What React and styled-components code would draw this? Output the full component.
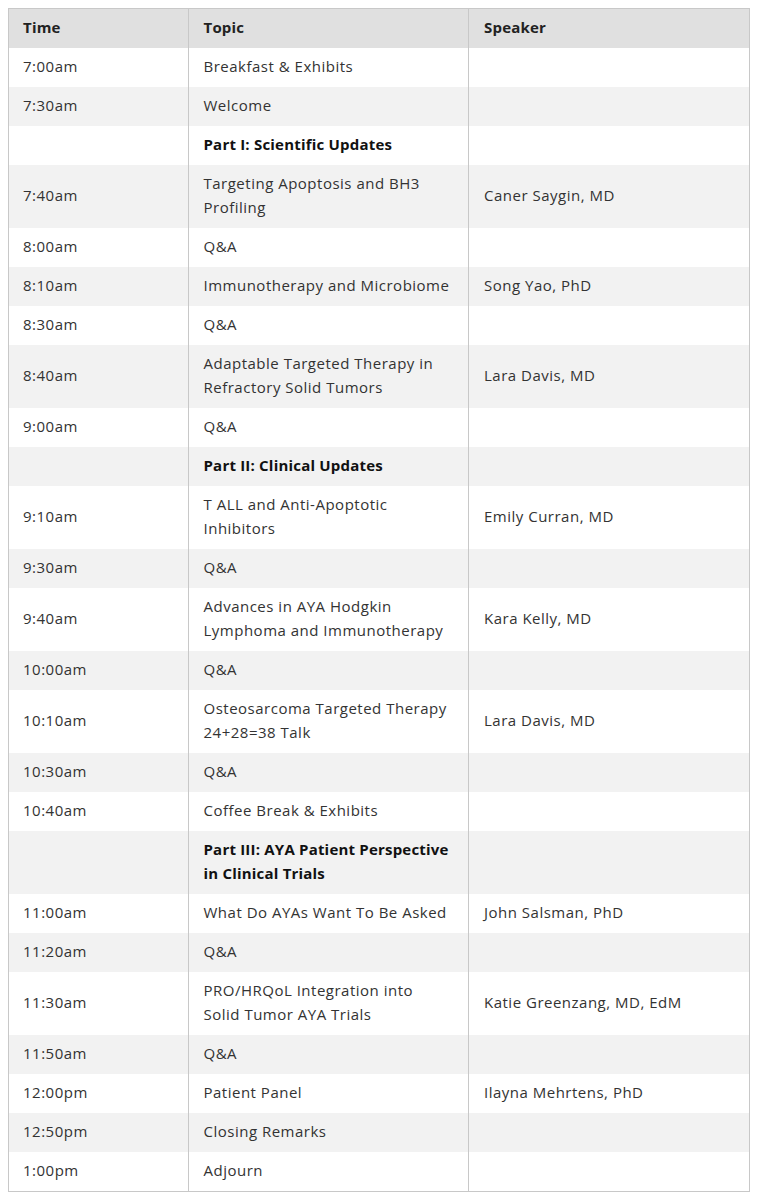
import React from "react";
import styled, { createGlobalStyle } from "styled-components";

const GlobalStyle = createGlobalStyle`
  html {
    overflow: hidden;
  }
  body {
    margin: 8px 7px 0 8px;
    background: #ffffff;
    font-family: "Open Sans", "Noto Sans", Arial, sans-serif;
  }
`;

const Frame = styled.div`
  box-sizing: border-box;
  border: 1px solid #c8c8c8;
`;

const Table = styled.table`
  width: 100%;
  border-collapse: collapse;
  table-layout: fixed;
  color: #333333;
  font-size: 15px;
  letter-spacing: 0.5px;
`;

const HeadCell = styled.th`
  box-sizing: border-box;
  background: #e0e0e0;
  text-align: left;
  font-weight: 700;
  color: #222222;
  line-height: 24px;
  padding: 6px 16px 9px 15px;
  letter-spacing: 0.2px;
  border-left: 1px solid #c8c8c8;
  width: ${({ $width }) => ($width ? `${$width}px` : "auto")};
  &:first-child {
    border-left: none;
    padding-left: 14px;
  }
`;

const Row = styled.tr`
  background: ${({ $shade }) => ($shade ? "#f2f2f2" : "#ffffff")};
`;

const Cell = styled.td`
  box-sizing: border-box;
  line-height: 24px;
  padding: 6px 16px 9px 15px;
  vertical-align: middle;
  white-space: nowrap;
  border-left: 1px solid #c8c8c8;
  font-weight: ${({ $bold }) => ($bold ? 700 : 400)};
  color: ${({ $bold }) => ($bold ? "#111111" : "#333333")};
  letter-spacing: ${({ $bold }) => ($bold ? "0.2px" : "0.5px")};
  &:first-child {
    border-left: none;
    padding-left: 14px;
  }
`;

const rows = [
  ["7:00am", ["Breakfast & Exhibits"], ""],
  ["7:30am", ["Welcome"], ""],
  ["", ["Part I: Scientific Updates"], "", true],
  ["7:40am", ["Targeting Apoptosis and BH3", "Profiling"], "Caner Saygin, MD"],
  ["8:00am", ["Q&A"], ""],
  ["8:10am", ["Immunotherapy and Microbiome"], "Song Yao, PhD"],
  ["8:30am", ["Q&A"], ""],
  ["8:40am", ["Adaptable Targeted Therapy in", "Refractory Solid Tumors"], "Lara Davis, MD"],
  ["9:00am", ["Q&A"], ""],
  ["", ["Part II: Clinical Updates"], "", true],
  ["9:10am", ["T ALL and Anti-Apoptotic", "Inhibitors"], "Emily Curran, MD"],
  ["9:30am", ["Q&A"], ""],
  ["9:40am", ["Advances in AYA Hodgkin", "Lymphoma and Immunotherapy"], "Kara Kelly, MD"],
  ["10:00am", ["Q&A"], ""],
  ["10:10am", ["Osteosarcoma Targeted Therapy", "24+28=38 Talk"], "Lara Davis, MD"],
  ["10:30am", ["Q&A"], ""],
  ["10:40am", ["Coffee Break & Exhibits"], ""],
  ["", ["Part III: AYA Patient Perspective", "in Clinical Trials"], "", true],
  ["11:00am", ["What Do AYAs Want To Be Asked"], "John Salsman, PhD"],
  ["11:20am", ["Q&A"], ""],
  ["11:30am", ["PRO/HRQoL Integration into", "Solid Tumor AYA Trials"], "Katie Greenzang, MD, EdM"],
  ["11:50am", ["Q&A"], ""],
  ["12:00pm", ["Patient Panel"], "Ilayna Mehrtens, PhD"],
  ["12:50pm", ["Closing Remarks"], ""],
  ["1:00pm", ["Adjourn"], ""],
];

export default function App() {
  return (
    <>
      <GlobalStyle />
      <Frame>
        <Table>
          <thead>
            <tr>
              <HeadCell $width={179}>Time</HeadCell>
              <HeadCell>Topic</HeadCell>
              <HeadCell>Speaker</HeadCell>
            </tr>
          </thead>
          <tbody>
            {rows.map(([time, topic, speaker, bold], i) => (
              <Row key={i} $shade={i % 2 === 1}>
                <Cell>{time}</Cell>
                <Cell $bold={bold}>
                  {topic.map((line, j) => (
                    <React.Fragment key={j}>
                      {j > 0 && <br />}
                      {line}
                    </React.Fragment>
                  ))}
                </Cell>
                <Cell>{speaker}</Cell>
              </Row>
            ))}
          </tbody>
        </Table>
      </Frame>
    </>
  );
}
